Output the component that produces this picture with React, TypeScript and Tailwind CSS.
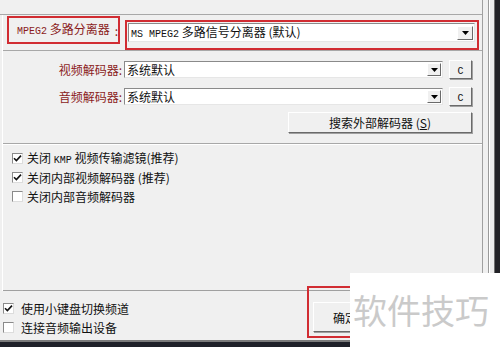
import React from 'react';

const cjk = "font-['Noto_Sans_CJK_SC',sans-serif]";

function Mono({ children }: { children: React.ReactNode }) {
  return <span className="font-['Liberation_Mono','Noto_Sans_CJK_SC',monospace] text-[10px]">{children}</span>;
}

function CheckBox({ checked = false }: { checked?: boolean }) {
  return (
    <div className="w-[11px] h-[11px] shrink-0 bg-white border border-t-[#8a8a8a] border-l-[#8a8a8a] border-b-[#dcdcdc] border-r-[#dcdcdc] flex items-center justify-center">
      {checked && (
        <svg width="9" height="9" viewBox="0 0 9 9">
          <path d="M1 4.2 L3.4 6.6 L8 1.6" stroke="#111" strokeWidth="1.6" fill="none" />
        </svg>
      )}
    </div>
  );
}

function DropBtn({ w, h }: { w: string; h: string }) {
  return (
    <div className={`${w} ${h} shrink-0 bg-[#f0f0f0] border border-t-white border-l-white border-b-[#6a6a6a] border-r-[#6a6a6a] flex items-center justify-center`}>
      <svg width="7" height="4" viewBox="0 0 7 4">
        <path d="M0 0 H7 L3.5 4 Z" fill="#000" />
      </svg>
    </div>
  );
}

function Combo({ children, className, big = false }: { children: React.ReactNode; className: string; big?: boolean }) {
  return (
    <div className={`${className} bg-white border border-t-[#8a8a8a] border-l-[#8a8a8a] border-b-[#e6e6e6] border-r-[#e6e6e6] flex items-center pl-[2px] pr-[1px]`}>
      <div className="flex-1 text-[12px] leading-[15px] text-[#111] whitespace-nowrap">{children}</div>
      {big ? <DropBtn w="w-[16px]" h="h-[14px]" /> : <DropBtn w="w-[14px]" h="h-[13px]" />}
    </div>
  );
}

function ClassicButton({ children, className }: { children: React.ReactNode; className: string }) {
  return (
    <div className={`${className} bg-[#f0f0f0] border border-t-white border-l-white border-b-[#6a6a6a] border-r-[#6a6a6a] shadow-[1px_1px_0_#a0a0a0] flex items-center justify-center text-[12px] leading-[15px] text-[#111]`}>
      <span className="whitespace-nowrap">{children}</span>
    </div>
  );
}

function DecoderRow({ label, className = '' }: { label: string; className?: string }) {
  return (
    <div className={`flex items-center h-[17px] ${className}`}>
      <div className="w-[119px] text-right text-[12px] leading-[15px] text-[#8b1c1c]">{label}:</div>
      <Combo className="ml-[2px] w-[319px] h-[17px]">系统默认</Combo>
      <ClassicButton className="ml-[6px] w-[23px] h-[19px]">
        <Mono>C</Mono>
      </ClassicButton>
    </div>
  );
}

function CheckRow({ checked, children, gap }: { checked?: boolean; children: React.ReactNode; gap: string }) {
  return (
    <div className={`flex items-center h-[19px] ${gap}`}>
      <CheckBox checked={checked} />
      <span className="text-[12px] leading-[15px] text-[#111] whitespace-nowrap">{children}</span>
    </div>
  );
}

export default function App() {
  return (
    <div className={`w-[500px] h-[347px] bg-[#f0f0f0] relative overflow-hidden flex flex-col ${cjk}`}>
      <div className="flex h-[291px]">
        {/* main panel */}
        <div className="w-[483px] border-r border-[#a0a0a0] flex flex-col">
          <div className="h-[15px] shrink-0 border-b border-[#a8a8a8]" />
          <div className="flex-1 ml-[2px] border-l border-white flex flex-col">
            {/* splitter row */}
            <div className="h-[36px] shrink-0 border-b border-[#a8a8a8] flex items-start pl-[4px]">
              <div className="mt-[1px] h-[28px] w-[113px] border-2 border-[#d12c32] flex items-center pl-[8px] text-[12px] leading-[15px] text-[#8b1c1c] whitespace-nowrap">
                <span>
                  <Mono>MPEG2</Mono> 多路分离器
                </span>
                <span className="ml-auto">:</span>
              </div>
              <div className="ml-[5px] mt-[5px] h-[30px] w-[354px] border-2 border-[#d12c32] p-[1px]">
                <Combo className="w-[347px] h-[19px]" big>
                  <Mono>MS MPEG2</Mono> 多路信号分离器 (默认)
                </Combo>
              </div>
            </div>

            {/* decoders */}
            <div className="h-[93px] shrink-0 border-b border-[#a8a8a8] shadow-[0_1px_0_#fff] flex flex-col pt-[10px]">
              <DecoderRow label="视频解码器" />
              <DecoderRow label="音频解码器" className="mt-[10px]" />
              <ClassicButton className="mt-[7px] ml-[285px] w-[184px] h-[21px]">
                搜索外部解码器 (<span className="underline">S</span>)
              </ClassicButton>
            </div>

            {/* options */}
            <div className="flex-1 border-b border-[#a0a0a0] flex flex-col pt-[5px] pl-[9px]">
              <CheckRow checked gap="gap-[4px]">
                关闭 <Mono>KMP</Mono> 视频传输滤镜(推荐)
              </CheckRow>
              <CheckRow checked gap="gap-[4px]">关闭内部视频解码器 (推荐)</CheckRow>
              <CheckRow gap="gap-[4px]">关闭内部音频解码器</CheckRow>
            </div>
          </div>
        </div>

        {/* window edge */}
        <div className="w-[5px] bg-[#f0f0f0]" />
        <div className="w-[1px] bg-[#9a9a9a]" />
        <div className="w-[1px] bg-white" />
        <div className="w-[4px] bg-[#ececec]" />
        <div className="w-[1px] bg-[#707070]" />
        <div className="w-[5px] bg-[#222226]" />
      </div>

      {/* bottom */}
      <div className="h-[49px] shrink-0 flex">
        <div className="w-[313px] shrink-0 flex flex-col pt-[8px] pl-[3px]">
          <CheckRow checked gap="gap-[7px]">使用小键盘切换频道</CheckRow>
          <CheckRow gap="gap-[7px]">连接音频输出设备</CheckRow>
        </div>
        <ClassicButton className="mt-[11px] w-[64px] h-[30px]">确定</ClassicButton>
      </div>
      <div className="h-[7px] shrink-0 border-t-2 border-[#7a7a7a] bg-[#1e2028]" />

      {/* annotation around confirm */}
      <div className="absolute left-[307px] top-[286px] w-[80px] h-[52px] border-2 border-[#d12c32]" />

      {/* watermark */}
      <div className="absolute left-[350px] top-[273px] w-[150px] h-[74px] bg-white flex items-center pl-[3px]">
        <span className="text-[34px] leading-[40px] text-[#cacaca] whitespace-nowrap">软件技巧</span>
      </div>
    </div>
  );
}
